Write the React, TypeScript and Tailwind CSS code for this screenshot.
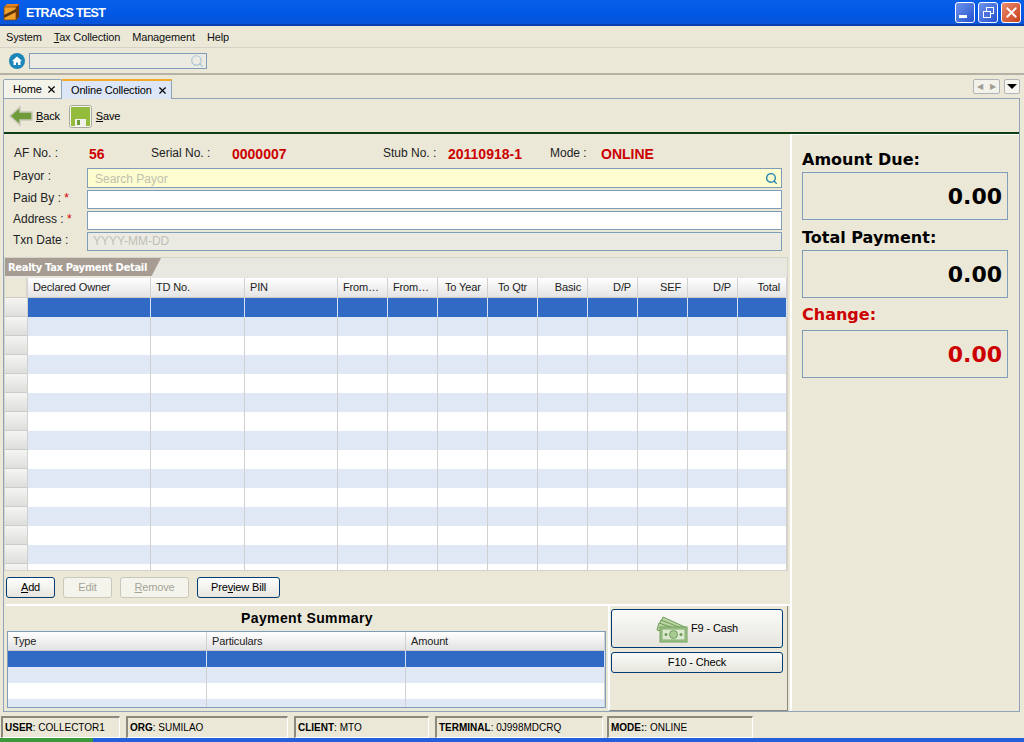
import React from 'react';
import { Search, X } from 'lucide-react';

const columns = [
  { label: 'Declared Owner', width: 'w-[123px]', align: 'text-left pl-[5px]' },
  { label: 'TD No.', width: 'w-[94px]', align: 'text-left pl-[5px]' },
  { label: 'PIN', width: 'w-[93px]', align: 'text-left pl-[5px]' },
  { label: 'From…', width: 'w-[50px]', align: 'text-left pl-[5px]' },
  { label: 'From…', width: 'w-[50px]', align: 'text-left pl-[5px]' },
  { label: 'To Year', width: 'w-[50px]', align: 'text-left pl-[7px]' },
  { label: 'To Qtr', width: 'w-[50px]', align: 'text-left pl-[10px]' },
  { label: 'Basic', width: 'w-[50px]', align: 'text-right pr-[6px]' },
  { label: 'D/P', width: 'w-[50px]', align: 'text-right pr-[6px]' },
  { label: 'SEF', width: 'w-[50px]', align: 'text-right pr-[6px]' },
  { label: 'D/P', width: 'w-[50px]', align: 'text-right pr-[6px]' },
  { label: 'Total', width: 'w-[49px]', align: 'text-right pr-[6px]' },
];

const summaryColumns = ['Type', 'Particulars', 'Amount'];
const rowCount = 14;

const rowColor = (i: number) => {
  if (i === 0) return 'bg-[#316ac5]';
  return i % 2 === 1 ? 'bg-[#e0e7f5]' : 'bg-white';
};

const WindowButton = ({ close, children }: { close?: boolean; children: React.ReactNode }) => (
  <div
    className={`w-[20px] h-[21px] rounded-[3px] border border-white flex items-center justify-center ${
      close ? 'bg-gradient-to-br from-[#e88a6c] to-[#c83d13]' : 'bg-gradient-to-br from-[#6f93ea] to-[#2450cf]'
    }`}
  >
    {children}
  </div>
);

const Label = ({ text, required }: { text: string; required?: boolean }) => (
  <div className="w-[74px] pb-[4px] leading-[12px] text-[12px] tracking-normal text-[#222]">
    {text}
    {required && <span className="text-[#d40000]"> *</span>}
  </div>
);

const FormRow = ({ label, required, className, children }: { label: string; required?: boolean; className: string; children?: React.ReactNode }) => (
  <div className="flex items-center mb-[2px]">
    <Label text={label} required={required} />
    <div className={`w-[695px] flex items-center justify-between border border-[#7f9db9] px-[7px] text-[12px] leading-[14px] tracking-normal ${className}`}>{children}</div>
  </div>
);

const HeadItem = ({ label, value, labelWidth, valueWidth }: { label: string; value: string; labelWidth: string; valueWidth: string }) => (
  <>
    <span className={`text-[12px] tracking-normal text-[#222] ${labelWidth}`}>{label}</span>
    <span className={`font-bold text-[14px] tracking-normal text-[#cc0000] mt-[2px] ${valueWidth}`}>{value}</span>
  </>
);

const ActionButton = ({ width, disabled, children }: { width: string; disabled?: boolean; children: React.ReactNode }) => (
  <button
    className={`h-[21px] rounded-[3px] border text-[11px] flex items-center justify-center ${width} ${
      disabled
        ? 'border-[#cac8bb] bg-[#f4f4ec] text-[#a5a397]'
        : 'border-[#003c74] bg-gradient-to-b from-white to-[#e6e5de] text-black'
    }`}
  >
    {children}
  </button>
);

const AmountBox = ({ label, red, labelClass }: { label: string; red?: boolean; labelClass: string }) => (
  <>
    <div className={`font-bold text-[16px] pt-[2px] leading-[16px] tracking-normal font-['DejaVu_Sans'] ${labelClass} ${red ? 'text-[#cc0000]' : 'text-black'}`}>{label}</div>
    <div
      className={`h-[48px] w-[206px] border border-[#7f9db9] flex items-center justify-end pr-[5px] font-bold text-[22px] tracking-normal font-['DejaVu_Sans'] ${
        red ? 'text-[#cc0000]' : 'text-black'
      }`}
    >
      0.00
    </div>
  </>
);

const StatusCell = ({ name, value, width, gap }: { name: string; value: string; width: string; gap: string }) => (
  <div className={`h-[22px] flex items-center pl-[2px] text-[10px] tracking-normal border-l-2 border-t-2 border-[#8c8a7c] border-r border-b border-r-white border-b-white ${width} ${gap}`}>
    <span className="font-bold">{name}</span>
    <span>: {value}</span>
  </div>
);

const CashIcon = () => (
  <svg width="32" height="30" viewBox="0 0 32 30">
    <g stroke="#6f9c58" strokeWidth="1" fill="#b9d5a3">
      <path d="M7 3 L31 14 L28 20 L3 12 Z" />
      <path d="M5 6 L30 16 L28 22 L2 14 Z" />
      <path d="M3 9 L29 18 L28 24 L1 16 Z" />
    </g>
    <rect x="4" y="13" width="27" height="15" fill="#a9cb92" stroke="#6f9c58" />
    <rect x="6" y="15" width="23" height="11" fill="#dcebd0" stroke="#7faa68" />
    <circle cx="17.5" cy="20.5" r="4" fill="#a9cb92" stroke="#6f9c58" />
    <circle cx="10" cy="20.5" r="1.5" fill="#6f9c58" />
    <circle cx="25" cy="20.5" r="1.5" fill="#6f9c58" />
  </svg>
);

const App = () => {
  return (
    <div className="w-[1024px] h-[742px] overflow-hidden flex flex-col bg-[#ebe8d8] text-black font-['Liberation_Sans',sans-serif] text-[11px] tracking-[-0.15px]">
      {/* title bar */}
      <div className="h-[26px] shrink-0 flex items-center pl-[2px] pr-[2px] bg-gradient-to-b from-[#0a5fe8] via-[#0058e6] to-[#0a55d8] border-b-2 border-[#0b3fae]">
        <svg width="18" height="18" viewBox="0 0 18 18" className="mr-[6px]">
          <path d="M2 4 L5 1 H17 V14 L14 17 H2 Z" fill="#e8831c" />
          <path d="M2 4 H14 V17 H2 Z" fill="#f2a02c" stroke="#7a3d08" strokeWidth="0.7" />
          <path d="M2 12 L14 6 V9 L2 15 Z" fill="#5c3510" />
          <path d="M14 4 L17 1 V14 L14 17 Z" fill="#6e3a0c" />
        </svg>
        <span className="flex-1 text-white font-bold text-[12.5px] tracking-[-0.7px] mt-[2px]">ETRACS TEST</span>
        <div className="flex gap-[3px] mr-[1px]">
          <WindowButton>
            <div className="w-[8px] h-[3px] bg-white mt-[9px] mr-[5px]" />
          </WindowButton>
          <WindowButton>
            <svg width="13" height="13" viewBox="0 0 13 13" fill="none" stroke="white">
              <rect x="4.5" y="1.5" width="7" height="6" />
              <rect x="1.5" y="5.5" width="7" height="6" fill="#4a70dc" />
            </svg>
          </WindowButton>
          <WindowButton close>
            <X size={17} color="white" strokeWidth={2.5} />
          </WindowButton>
        </div>
      </div>

      {/* menu */}
      <div className="h-[21px] shrink-0 flex items-center pl-[6px] gap-[12px] text-[11px] text-[#111] border-b border-[#d6d3c6] mt-[1px]">
        <span>System</span>
        <span><u>T</u>ax Collection</span>
        <span>Management</span>
        <span>Help</span>
      </div>

      {/* search bar */}
      <div className="h-[27px] shrink-0 flex items-center pl-[9px] border-b-2 border-[#b5b2a5]">
        <svg width="16" height="16" viewBox="0 0 16 16" className="mr-[4px]">
          <circle cx="8" cy="8" r="8" fill="#1d86b8" />
          <path d="M8 3.5 L13 8 H11.5 V12 H9 V9.5 H7 V12 H4.5 V8 H3 Z" fill="white" />
        </svg>
        <div className="w-[178px] h-[16px] border border-[#7f9db9] bg-[#ecebe3] flex justify-end items-center pr-[2px]">
          <Search size={14} color="#a6c5d4" strokeWidth={2} />
        </div>
      </div>

      {/* tabs */}
      <div className="h-[23px] shrink-0 flex items-end pl-[3px] relative z-10">
        <div className="h-[19px] w-[59px] flex items-center justify-between pl-[9px] pr-[4px] bg-[#f4f3ea] border border-b-0 border-[#8fa4b8] rounded-t-[2px]">
          <span className="text-[11px]">Home</span>
          <X size={11} strokeWidth={2.5} />
        </div>
        <div className="h-[20px] w-[110px] translate-y-px flex items-center justify-between pl-[9px] pr-[3px] bg-[#dde6f6] border-t-2 border-t-[#f5a92c] border-r border-r-[#8fa4b8]">
          <span className="text-[11px]">Online Collection</span>
          <X size={11} strokeWidth={2.5} />
        </div>
        <div className="absolute right-[4px] top-[4px] flex gap-[4px]">
          <div className="w-[27px] h-[15px] rounded-[2px] border border-[#b0b4b8] bg-[#f2f1ea] flex items-center justify-around text-[#a09e92] text-[8px]">
            <span>◀</span>
            <span>▶</span>
          </div>
          <div className="w-[16px] h-[15px] rounded-[2px] border border-[#b0b4b8] bg-[#f6f5ee] flex items-center justify-center">
            <div className="w-0 h-0 border-x-[5px] border-x-transparent border-t-[5px] border-t-black" />
          </div>
        </div>
      </div>

      {/* tab panel */}
      <div className="h-[614px] w-[1017px] shrink-0 ml-[3px] border border-[#8fa4b8] flex flex-col">
        {/* action bar */}
        <div className="h-[35px] shrink-0 flex items-center pl-[5px] pt-[1px] border-b-2 border-[#0f3d13] text-[11px]">
          <svg width="24" height="22" viewBox="0 0 24 22" className="mr-[3px]">
            <path d="M1 11 L11 2 V7 H23 V15 H11 V20 Z" fill="#6f9c3a" stroke="#c9c7b8" strokeWidth="1.5" />
          </svg>
          <span className="mr-[9px]"><u>B</u>ack</span>
          <svg width="23" height="23" viewBox="0 0 23 23" className="mr-[4px]">
            <rect x="0.5" y="0.5" width="22" height="22" rx="2" fill="#f4f4ec" stroke="#a8a89c" />
            <rect x="2" y="2" width="19" height="19" fill="#93bb3c" />
            <rect x="6" y="14" width="11" height="7" fill="#f2f2ea" />
            <rect x="8" y="15" width="3" height="5" fill="#6f9c3a" />
          </svg>
          <span><u>S</u>ave</span>
        </div>

        <div className="flex flex-1 min-h-0">
          {/* left side */}
          <div className="w-[788px] shrink-0 flex flex-col border-r-2 border-white">
            {/* form */}
            <div className="h-[123px] shrink-0 pl-[9px]">
              <div className="h-[34px] flex items-center pl-[1px] pt-[4px]">
                <HeadItem label="AF No. :" value="56" labelWidth="w-[75px]" valueWidth="w-[62px]" />
                <HeadItem label="Serial No. :" value="0000007" labelWidth="w-[81px]" valueWidth="w-[151px]" />
                <HeadItem label="Stub No. :" value="20110918-1" labelWidth="w-[65px]" valueWidth="w-[102px]" />
                <HeadItem label="Mode :" value="ONLINE" labelWidth="w-[51px]" valueWidth="w-[60px]" />
              </div>
              <FormRow label="Payor :" className="h-[20px] bg-[#fdfdcf] text-[#c0c0b0]">
                <span className="pt-[2px]">Search Payor</span>
                <Search size={13} color="#1d7fb0" strokeWidth={2.5} className="-mr-[4px]" />
              </FormRow>
              <FormRow label="Paid By :" required className="h-[19px] bg-white" />
              <FormRow label="Address :" required className="h-[19px] bg-white" />
              <FormRow label="Txn Date  :" className="h-[19px] bg-[#ecebe3] text-[#c0c0b8] !px-[5px]">
                <span className="pb-[2px]">YYYY-MM-DD</span>
              </FormRow>
            </div>

            {/* detail table */}
            <div className="h-[314px] shrink-0 w-[784px] border border-[#d6d4ca] flex flex-col bg-[#e8e7e0]">
              <div className="h-[18px] shrink-0 w-[156px] bg-[#a69c92] text-white font-bold text-[10px] font-['DejaVu_Sans'] tracking-[-0.35px] flex items-center pl-[3px] [clip-path:polygon(0_0,100%_0,94%_100%,0_100%)]">
                Realty Tax Payment Detail
              </div>
              <div className="h-[20px] shrink-0 flex mt-[2px] border-b border-[#d0cec4]">
                <div className="w-[23px] border-r-2 border-[#d6d6d0] bg-[#ebe8d8]" />
                {columns.map((c, i) => (
                  <div
                    key={i}
                    className={`${c.width} ${c.align} leading-[19px] text-[11px] text-[#222] bg-gradient-to-b from-white to-[#e4e4e4] border-r border-[#d0d0d0] overflow-hidden whitespace-nowrap`}
                  >
                    {c.label}
                  </div>
                ))}
              </div>
              <div className="flex-1 min-h-0 overflow-hidden">
                {Array.from({ length: rowCount + 1 }).map((_, i) => (
                  <div key={i} className="h-[19px] flex">
                    <div className="w-[23px] bg-gradient-to-b from-[#f5f5f3] to-[#dededb] border-r border-[#d0d0d0] border-b border-b-[#cccccc]" />
                    {columns.map((c, j) => (
                      <div key={j} className={`${c.width} ${rowColor(i)} border-r ${i === 0 ? 'border-white/80' : 'border-[#d0d0d0]'}`} />
                    ))}
                  </div>
                ))}
              </div>
            </div>

            {/* action buttons */}
            <div className="h-[33px] shrink-0 flex items-center gap-[8px] pl-[2px]">
              <ActionButton width="w-[49px]"><span><u>A</u>dd</span></ActionButton>
              <ActionButton width="w-[49px]" disabled>Edit</ActionButton>
              <ActionButton width="w-[69px]" disabled><span><u>R</u>emove</span></ActionButton>
              <ActionButton width="w-[83px]"><span>Pre<u>v</u>iew Bill</span></ActionButton>
            </div>

            {/* payment summary */}
            <div className="flex flex-1 min-h-0 ml-[2px] border-t-2 border-white">
              <div className="w-[602px] shrink-0 flex flex-col">
                <div className="h-[25px] shrink-0 flex items-center justify-center font-bold text-[14px] tracking-[0.4px]">
                  Payment Summary
                </div>
                <div className="w-[599px] h-[77px] ml-[1px] border border-[#7f9db9] overflow-hidden">
                  <div className="h-[19px] flex border-b border-[#c8c8c8]">
                    {summaryColumns.map((c) => (
                      <div key={c} className="w-[199px] pl-[5px] leading-[19px] text-[#222] bg-gradient-to-b from-white to-[#e2e2e2] border-r border-[#d0d0d0]">
                        {c}
                      </div>
                    ))}
                  </div>
                  {[0, 1, 2, 3].map((i) => (
                    <div key={i} className="h-[16px] flex">
                      {summaryColumns.map((c) => (
                        <div key={c} className={`w-[199px] ${rowColor(i)} border-r ${i === 0 ? 'border-white/80' : 'border-[#d0d0d0]'}`} />
                      ))}
                    </div>
                  ))}
                </div>
              </div>
              <div className="w-[180px] h-[105px] shrink-0 border-r border-b border-[#8c8a7c] border-l-2 border-l-white pl-[1px] pt-[3px] flex flex-col gap-[4px]">
                <button className="h-[39px] w-[172px] rounded-[3px] border border-[#003c74] bg-gradient-to-b from-[#fbfbf8] to-[#e6e5de] flex items-center justify-center gap-[3px] text-[11px]">
                  <CashIcon />
                  <span>F9 - Cash</span>
                </button>
                <button className="h-[21px] w-[172px] rounded-[3px] border border-[#003c74] bg-gradient-to-b from-[#fbfbf8] to-[#e6e5de] text-[11px]">
                  F10 - Check
                </button>
              </div>
            </div>
          </div>

          {/* amounts */}
          <div className="flex-1 pl-[10px] pt-[15px] border-t border-white">
            <AmountBox label="Amount Due:" labelClass="mb-[4px]" />
            <AmountBox label="Total Payment:" labelClass="mt-[8px] mb-[4px]" />
            <AmountBox label="Change:" red labelClass="mt-[7px] mb-[7px]" />
          </div>
        </div>
      </div>

      {/* status bar */}
      <div className="h-[26px] shrink-0 flex items-start pt-[4px] pl-[1px]">
        <StatusCell name="USER" value="COLLECTOR1" width="w-[119px]" gap="mr-[6px]" />
        <StatusCell name="ORG" value="SUMILAO" width="w-[162px]" gap="mr-[6px]" />
        <StatusCell name="CLIENT" value="MTO" width="w-[135px]" gap="mr-[6px]" />
        <StatusCell name="TERMINAL" value="0J998MDCRQ" width="w-[168px]" gap="mr-[4px]" />
        <StatusCell name="MODE:" value="ONLINE" width="w-[146px]" gap="" />
      </div>

      {/* taskbar edge */}
      <div className="flex-1 flex">
        <div className="w-[93px] bg-[#3c9a3c]" />
        <div className="flex-1 bg-[#245edb]" />
      </div>
    </div>
  );
};

export default App;
